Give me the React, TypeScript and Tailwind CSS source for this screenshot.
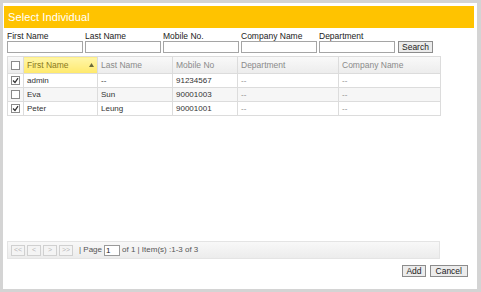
import React from "react";

const font = { fontFamily: '"Liberation Sans", Arial, sans-serif' };

function Check({ on }: { on: boolean }) {
  return (
    <div className="w-[9px] h-[9px] border border-[#8a8a8a] bg-white flex items-center justify-center">
      {on && (
        <svg width="7" height="7" viewBox="0 0 7 7">
          <path d="M1 3.5 L3 5.5 L6 1.2" stroke="#333" strokeWidth="1.3" fill="none" />
        </svg>
      )}
    </div>
  );
}

const rows = [
  { on: true, first: "admin", last: "--", mobile: "91234567", dept: "--", comp: "--" },
  { on: false, first: "Eva", last: "Sun", mobile: "90001003", dept: "--", comp: "--" },
  { on: true, first: "Peter", last: "Leung", mobile: "90001001", dept: "--", comp: "--" },
];

const labels = ["First Name", "Last Name", "Mobile No.", "Company Name", "Department"];

export default function App() {
  return (
    <div style={font} className="w-[481px] h-[292px] bg-white">
      <div className="w-[481px] h-[292px] border-t-[3px] border-l-[3px] border-r-[4px] border-b-[3px] border-[#d4d4d4] bg-white flex flex-col">
        <div className="mt-[3px] ml-[1px] mr-[3px] h-[22px] bg-[#ffc300] flex items-center pl-[4px]">
          <span className="text-white text-[11px] leading-none tracking-[0.1px]">Select Individual</span>
        </div>
        <div className="pl-[4px] pt-[3px]">
          <div className="flex">
            {labels.map((l) => (
              <div key={l} className="w-[78px] text-[8.5px] leading-[10px] text-[#222]">
                {l}
              </div>
            ))}
          </div>
          <div className="flex items-center mt-[0px]">
            {labels.map((l) => (
              <div key={l} className="w-[78px]">
                <div className="w-[76px] h-[12px] border border-[#a5a5a5] bg-white" />
              </div>
            ))}
            <div className="ml-[1px] h-[12px] px-[3px] border border-[#8c8c8c] bg-[#ececec] text-[8.5px] leading-[10px] text-[#222] flex items-center">
              Search
            </div>
          </div>
          <div className="mt-[3px] w-[433px] h-[185px] flex flex-col">
            <table className="border-collapse text-[8px] text-[#333] table-fixed w-[433px]">
              <colgroup>
                <col className="w-[16px]" />
                <col className="w-[74px]" />
                <col className="w-[75px]" />
                <col className="w-[65px]" />
                <col className="w-[101px]" />
                <col className="w-[102px]" />
              </colgroup>
              <thead>
                <tr className="h-[17px] bg-gradient-to-b from-[#f9f9f9] to-[#ececec] text-[#8a8a8a] text-[8.5px]">
                  <th className="border border-[#dcdcdc] font-normal">
                    <div className="flex justify-center">
                      <Check on={false} />
                    </div>
                  </th>
                  <th className="border border-[#dcdcdc] font-normal text-left pl-[3px] bg-gradient-to-b from-[#fff6a8] to-[#ffe96a] text-[#8a7a20]">
                    <div className="flex items-center justify-between pr-[3px]">
                      <span>First Name</span>
                      <svg width="5" height="4" viewBox="0 0 5 4">
                        <path d="M2.5 0 L5 4 L0 4 Z" fill="#6b6b3a" />
                      </svg>
                    </div>
                  </th>
                  <th className="border border-[#dcdcdc] font-normal text-left pl-[3px]">Last Name</th>
                  <th className="border border-[#dcdcdc] font-normal text-left pl-[3px]">Mobile No</th>
                  <th className="border border-[#dcdcdc] font-normal text-left pl-[3px]">Department</th>
                  <th className="border border-[#dcdcdc] font-normal text-left pl-[3px]">Company Name</th>
                </tr>
              </thead>
              <tbody>
                {rows.map((r, i) => (
                  <tr key={i} className={`h-[14px] ${i === 1 ? "bg-[#f6f6f6]" : "bg-white"}`}>
                    <td className="border border-[#dcdcdc]">
                      <div className="flex justify-center">
                        <Check on={r.on} />
                      </div>
                    </td>
                    <td className="border border-[#dcdcdc] pl-[3px]">{r.first}</td>
                    <td className="border border-[#dcdcdc] pl-[3px]">{r.last}</td>
                    <td className="border border-[#dcdcdc] pl-[3px]">{r.mobile}</td>
                    <td className="border border-[#dcdcdc] pl-[3px] text-[#888]">{r.dept}</td>
                    <td className="border border-[#dcdcdc] pl-[3px] text-[#888]">{r.comp}</td>
                  </tr>
                ))}
              </tbody>
            </table>
          </div>
          <div className="w-[433px] h-[18px] border border-[#e4e4e4] bg-gradient-to-b from-[#f8f8f8] to-[#ececec] flex items-center pl-[3px] text-[8px] text-[#555]">
            {["<<", "<", ">", ">>"].map((b) => (
              <div
                key={b}
                className="h-[11px] w-[14px] mr-[2px] border border-[#d0d0d0] bg-[#f4f4f4] text-[#b8b8b8] text-[7px] flex items-center justify-center"
              >
                {b}
              </div>
            ))}
            <span className="ml-[4px]">| Page</span>
            <div className="ml-[2px] w-[16px] h-[11px] border border-[#9a9a9a] bg-white text-[8px] leading-[9px] pl-[1px] text-[#222]">
              1
            </div>
            <span className="ml-[2px]">of 1 | Item(s) :1-3 of 3</span>
          </div>
          <div className="flex justify-end mt-[6px] pr-[9px] gap-[4px]">
            <div className="h-[12px] px-[3px] border border-[#8c8c8c] bg-[#ececec] text-[8.5px] leading-[10px] text-[#222] flex items-center">
              Add
            </div>
            <div className="h-[12px] px-[5px] border border-[#8c8c8c] bg-[#ececec] text-[8.5px] leading-[10px] text-[#222] flex items-center">
              Cancel
            </div>
          </div>
        </div>
      </div>
    </div>
  );
}
